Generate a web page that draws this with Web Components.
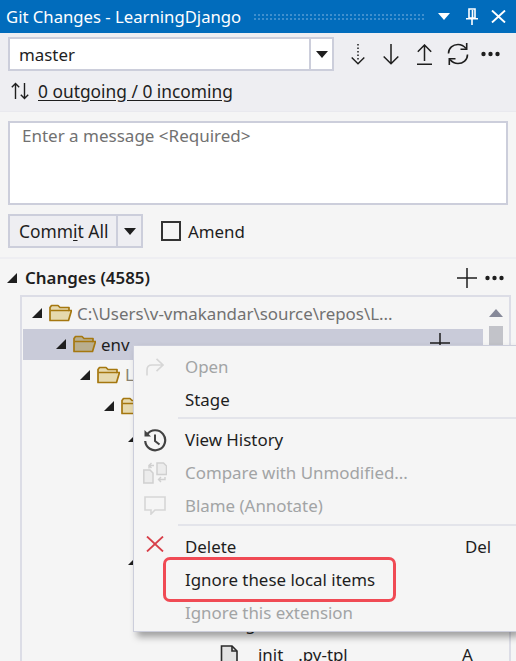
<!DOCTYPE html>
<html>
<head>
<meta charset="utf-8">
<title>Git Changes</title>
<style>
html, body { margin: 0; padding: 0; }
body {
    width: 516px;
    height: 661px;
    overflow: hidden;
    background: #f5f5f5;
    color: #1e1e1e;
    font: 16.9px "Noto Sans", "Open Sans", sans-serif;
}
</style>
</head>
<body>
<git-changes-panel></git-changes-panel>
<script>
const ICONS = {
    folder: color => `<svg width="23" height="18" viewBox="0 0 23 18"><path d="M1 16.5V3.5L2.5 1.5H9L11 3.5H20V6.5H22.5L19.5 16.5Z" fill="${color}" stroke="#a5770f" stroke-width="1.7" stroke-linejoin="round"/><path d="M1.5 6.5H20" stroke="#a5770f" stroke-width="1.5" fill="none"/></svg>`,
    file: `<svg width="18" height="20" viewBox="0 0 18 20"><path d="M1.5 1H12L17 6V24H1.5Z" fill="#e2e2e2" stroke="#2a2a2a" stroke-width="1.6"/><path d="M12 1V6H17" fill="none" stroke="#2a2a2a" stroke-width="1.6"/></svg>`,
    fetch: `<svg width="14" height="21" viewBox="0 0 14 21"><path d="M7 0V16" stroke="#1e1e1e" stroke-width="1.5" stroke-dasharray="1.6 1.9" fill="none"/><path d="M.7 13.5L7 19.8L13.3 13.5" stroke="#1e1e1e" stroke-width="1.4" fill="none"/></svg>`,
    pull: `<svg width="16" height="21" viewBox="0 0 16 21"><path d="M8 0V19.5M.7 12.5L8 19.8L15.3 12.5" stroke="#1e1e1e" stroke-width="1.5" fill="none"/></svg>`,
    push: `<svg width="15" height="21" viewBox="0 0 15 21"><path d="M7.5 1V17M.8 7.8L7.5 1L14.2 7.8M0 20.2H15" stroke="#1e1e1e" stroke-width="1.5" fill="none"/></svg>`,
    sync: `<svg width="22" height="22" viewBox="0 0 22 22"><path d="M1.5 10.5C1.5 5 6 1.5 11 1.5C14.5 1.5 17 3 19 5.5M20.5 11.5C20.5 17 16 20.5 11 20.5C7.5 20.5 5 19 3 16.5" stroke="#1e1e1e" stroke-width="1.6" fill="none"/><path d="M19.7 0V6.2H13.5M2.3 22V15.8H8.5" stroke="#1e1e1e" stroke-width="1.6" fill="none"/></svg>`,
    dots: `<svg width="19" height="6" viewBox="0 0 19 6"><circle cx="2.5" cy="3" r="2.2" fill="#1e1e1e"/><circle cx="9.5" cy="3" r="2.2" fill="#1e1e1e"/><circle cx="16.5" cy="3" r="2.2" fill="#1e1e1e"/></svg>`,
    plus: `<svg width="20" height="20" viewBox="0 0 20 20"><path d="M10 0V20M0 10H20" stroke="#1e1e1e" stroke-width="1.5" fill="none"/></svg>`,
    updown: `<svg width="18" height="18" viewBox="0 0 18 18"><path d="M4.5 17V1.5M.8 5.2L4.5 1.5L8.2 5.2M13.5 1V16.5M9.8 12.8L13.5 16.5L17.2 12.8" stroke="#1e1e1e" stroke-width="1.4" fill="none"/></svg>`,
    open: `<svg width="18" height="18" viewBox="0 0 18 18"><path d="M1 17.5V12C1 9 3 7 6 7H17M10.5 .8L17 7L10.5 13.2" stroke="#d6d6d6" stroke-width="1.6" fill="none"/></svg>`,
    history: `<svg width="24" height="24" viewBox="0 0 24 24"><path d="M4 6.5A10 10 0 1 1 2.2 13" stroke="#424242" stroke-width="2.2" fill="none"/><path d="M1.5 2L8 8.5H1.5Z" fill="#424242"/><path d="M12 6.5V13L16.5 16.5" stroke="#424242" stroke-width="2" fill="none"/></svg>`,
    compare: `<svg width="24" height="22" viewBox="0 0 24 22"><path d="M14 1H20.5L23.5 4V12.5H14Z" fill="#ececec" stroke="#d0d0d0" stroke-width="1.5"/><path d="M.8 8H7L10 11V21H.8Z" fill="#ececec" stroke="#d0d0d0" stroke-width="1.5"/><path d="M11 3.5H6V6.5M8.5 1L6 3.5L8.5 6M22 15V17.5H16M18 15L15.5 17.5L18 20" stroke="#d0d0d0" stroke-width="1.4" fill="none"/></svg>`,
    blame: `<svg width="22" height="19" viewBox="0 0 22 19"><path d="M1 1H21V14H11L7 18V14H1Z" fill="none" stroke="#d6d6d6" stroke-width="1.6"/></svg>`,
    del: `<svg width="18" height="16" viewBox="0 0 18 16"><path d="M1 .5L17 15.5M17 .5L1 15.5" stroke="#d8404a" stroke-width="1.8" fill="none"/></svg>`
};

class GitTitleBar extends HTMLElement {
    constructor() {
        super();
        this.attachShadow({mode: "open"});
        this.shadowRoot.innerHTML = /* html */`
        <style>
        :host { display: flex; align-items: center; height: 33px; background: #016cbc; color: #fff; padding: 0 10px 0 6px; box-sizing: border-box; }
        .title { font-size: 16.7px; white-space: nowrap; }
        .grip { flex: 1; height: 8px; margin: 0 12px 0 12px; background-image: radial-gradient(#3f8fce 1px, transparent 1.2px); background-size: 4px 4px; }
        .btns { display: flex; align-items: center; }
        svg { display: block; }
        </style>
        <span class="title"><slot></slot></span>
        <div class="grip"></div>
        <div class="btns">
            <svg width="12" height="7" viewBox="0 0 12 7"><path d="M0 0H12L6 7Z" fill="#fff"/></svg>
            <svg style="margin:0 13px 0 16px" width="12" height="17" viewBox="0 0 12 17"><path d="M3 1H9V10H3ZM6.5 2V10M0 10.8H12M6 11V17" stroke="#fff" stroke-width="1.6" fill="none"/></svg>
            <svg width="15" height="13" viewBox="0 0 15 13"><path d="M1 0.5L14 12.5M14 0.5L1 12.5" stroke="#fff" stroke-width="1.9" fill="none"/></svg>
        </div>`;
    }
}

class BranchBar extends HTMLElement {
    constructor() {
        super();
        this.attachShadow({mode: "open"});
        this.shadowRoot.innerHTML = /* html */`
        <style>
        :host { display: block; background: #eeeef2; height: 79px; padding: 4px 8px 0; box-sizing: border-box; border-bottom: 1px solid #e9e9ee; }
        .top { display: flex; align-items: center; }
        .combo { display: flex; width: 326px; height: 34px; box-sizing: border-box; border: 2px solid #cccedb; background: #fff; }
        .name { flex: 1; padding-left: 9px; line-height: 31px; }
        .arrow { width: 21px; border-left: 2px solid #cccedb; display: flex; align-items: center; justify-content: center; }
        .tools { display: flex; align-items: center; margin-left: 17px; gap: 18px; }
        .tools .s { margin-left: -3px; }
        .tools .d { margin-left: -6px; }
        .sync { display: flex; align-items: center; gap: 9px; margin: 8px 0 0 3px; font-size: 17.35px; }
        a { color: inherit; text-decoration: underline; text-underline-offset: 2px; }
        svg { display: block; }
        </style>
        <div class="top">
            <div class="combo">
                <div class="name"><slot name="branch"></slot></div>
                <div class="arrow"><svg width="12" height="7" viewBox="0 0 12 7"><path d="M0 0H12L6 7Z" fill="#1e1e1e"/></svg></div>
            </div>
            <div class="tools">${ICONS.fetch}${ICONS.pull}${ICONS.push}<span class="s">${ICONS.sync}</span><span class="d">${ICONS.dots}</span></div>
        </div>
        <div class="sync">${ICONS.updown}<a><slot name="status"></slot></a></div>`;
    }
}

class CommitBox extends HTMLElement {
    constructor() {
        super();
        this.attachShadow({mode: "open"});
        this.shadowRoot.innerHTML = /* html */`
        <style>
        :host { display: block; padding: 9px 8px 9px; border-bottom: 2px solid #eeeef2; }
        .msg { height: 84px; box-sizing: border-box; border: 2px solid #cccedb; background: #fff; color: #717171; padding: 0 12px; line-height: 26px; font-size: 17px; }
        .row { display: flex; align-items: center; margin-top: 9px; }
        .split { display: flex; height: 34px; box-sizing: border-box; border: 2px solid #cccedb; background: #eeeef2; }
        .main { width: 108px; padding-left: 9px; box-sizing: border-box; line-height: 31px; border-right: 2px solid #cccedb; font-size: 17.4px; }
        .main u { text-underline-offset: 2px; }
        .drop { width: 23px; display: flex; align-items: center; justify-content: center; }
        .check { width: 20px; height: 20px; box-sizing: border-box; border: 2px solid #333; background: #f5f5f5; margin-left: 18px; }
        .label { margin-left: 7px; padding-top: 1px; }
        svg { display: block; }
        </style>
        <div class="msg">Enter a message &lt;Required&gt;</div>
        <div class="row">
            <div class="split">
                <div class="main">Comm<u>i</u>t All</div>
                <div class="drop"><svg width="12" height="7" viewBox="0 0 12 7"><path d="M0 0H12L6 7Z" fill="#1e1e1e"/></svg></div>
            </div>
            <div class="check"></div>
            <div class="label">Amend</div>
        </div>`;
    }
}

class TreeRow extends HTMLElement {
    connectedCallback() {
        if (this.shadowRoot) return;
        this.attachShadow({mode: "open"});
        const level = Number(this.getAttribute("level") || 0);
        const kind = this.getAttribute("kind") || "folder";
        const selected = this.hasAttribute("selected");
        const icon = kind === "file" ? ICONS.file : ICONS.folder(selected ? "#b9ae8e" : "#e6d9ae");
        const tri = kind === "file" ? "" : `<svg class="tri" width="12" height="12" viewBox="0 0 12 12"><path d="M11 1V11H1Z" fill="#1e1e1e"/></svg>`;
        this.shadowRoot.innerHTML = /* html */`
        <style>
        :host { display: block; }
        .row { display: flex; align-items: center; height: 30.8px; padding-left: ${8 + level * 24}px; white-space: nowrap; position: relative; color: var(--row-color, #1e1e1e); }
        :host([selected]) .row { background: #c9cbd9; }
        .tri { width: 12px; flex: none; margin-right: 6px; }
        .spacer { width: 21px; flex: none; }
        .icon { flex: none; margin-right: 5px; display: flex; }
        :host([kind="file"]) .icon { margin-top: 6px; }
        :host([kind="file"]) .status { padding-top: 4px; }
        .text { flex: 1; overflow: hidden; padding-top: var(--text-top, 0); }
        .status { position: absolute; left: 439px; }
        .add { position: absolute; left: 407px; top: 4.5px; }
        svg { display: block; }
        </style>
        <div class="row">
            ${tri || '<span class="spacer"></span>'}
            <span class="icon">${icon}</span>
            <span class="text"><slot></slot></span>
            ${selected ? `<span class="add">${ICONS.plus}</span>` : ""}
            ${this.hasAttribute("status") ? `<span class="status">${this.getAttribute("status")}</span>` : ""}
        </div>`;
    }
}

class ChangesTree extends HTMLElement {
    constructor() {
        super();
        this.attachShadow({mode: "open"});
        this.shadowRoot.innerHTML = /* html */`
        <style>
        :host { display: block; padding-top: 5px; }
        .head { display: flex; align-items: center; height: 27px; padding: 0 12px 0 6px; }
        .tri { margin-right: 7px; }
        .title { flex: 1; font-weight: 600; font-size: 16.9px; }
        .acts { display: flex; align-items: center; gap: 8px; }
        .box { margin: 4px 5px 0 20px; border: 2px solid #dcdde6; border-bottom: 0; height: 400px; display: flex; box-sizing: border-box; padding-left: 1px; padding-top: 1px; }
        .rows { width: 460px; flex: none; }
        .bar { width: 26px; display: flex; flex-direction: column; align-items: center; gap: 9px; padding-top: 11px; }
        .thumb { width: 14px; height: 40px; background: #c2c3c9; }
        svg { display: block; }
        </style>
        <div class="head">
            <svg class="tri" width="12" height="12" viewBox="0 0 12 12"><path d="M11 1V11H1Z" fill="#1e1e1e"/></svg>
            <span class="title"><slot name="title"></slot></span>
            <span class="acts">${ICONS.plus}${ICONS.dots}</span>
        </div>
        <div class="box">
            <div class="rows"><slot></slot></div>
            <div class="bar">
                <svg width="14" height="8" viewBox="0 0 14 8"><path d="M7 0L14 8H0Z" fill="#868999"/></svg>
                <div class="thumb"></div>
            </div>
        </div>`;
    }
}

class MenuItem extends HTMLElement {
    connectedCallback() {
        if (this.shadowRoot) return;
        this.attachShadow({mode: "open"});
        const icon = ICONS[this.getAttribute("icon")] || "";
        const key = this.getAttribute("key") || "";
        this.shadowRoot.innerHTML = /* html */`
        <style>
        :host { display: flex; align-items: center; height: 33px; color: #1e1e1e; }
        :host([disabled]) { color: #a2a4a5; }
        .icon { width: 51px; flex: none; display: flex; justify-content: center; padding-right: 9px; box-sizing: border-box; }
        :host([icon="del"]) .icon { margin-top: -5px; }
        .text { flex: 1; white-space: nowrap; }
        .key { width: 51px; }
        svg { display: block; }
        </style>
        <span class="icon">${icon}</span>
        <span class="text"><slot></slot></span>
        <span class="key">${key}</span>`;
    }
}

class ContextMenu extends HTMLElement {
    constructor() {
        super();
        this.attachShadow({mode: "open"});
        this.shadowRoot.innerHTML = /* html */`
        <style>
        :host { display: block; position: absolute; left: 133px; top: 345px; width: 383px; height: 287px; box-sizing: border-box; background: #f5f5f5; border: 1px solid #cccedb; border-right: 0; padding-top: 4px; box-shadow: 4px 5px 7px rgba(0,0,0,.35); }
        </style>
        <slot></slot>`;
    }
}

class MenuSep extends HTMLElement {
    constructor() {
        super();
        this.attachShadow({mode: "open"});
        this.shadowRoot.innerHTML = `<style>:host { display: block; height: 2px; margin: 1px 0 4px 44px; background: #e3e4ea; }</style>`;
    }
}

class GitChangesPanel extends HTMLElement {
    constructor() {
        super();
        this.attachShadow({mode: "open"});
        this.shadowRoot.innerHTML = /* html */`
        <style>
        :host { display: block; position: relative; width: 516px; height: 661px; overflow: hidden; }
        .mark { position: absolute; left: 163px; top: 557px; width: 233px; height: 45px; box-sizing: border-box; border: 3px solid #f04a54; border-radius: 7px; }
        </style>
        <git-title-bar>Git Changes - LearningDjango</git-title-bar>
        <branch-bar>
            <span slot="branch">master</span>
            <span slot="status">0 outgoing / 0 incoming</span>
        </branch-bar>
        <commit-box></commit-box>
        <changes-tree>
            <span slot="title">Changes (4585)</span>
            <tree-row level="0" style="--row-color:#717171">C:\\Users\\v-vmakandar\\source\\repos\\L...</tree-row>
            <tree-row level="1" selected>env</tree-row>
            <tree-row level="2" style="--row-color:#8a8270">Lib</tree-row>
            <tree-row level="3"></tree-row>
            <tree-row level="4"></tree-row>
            <tree-row level="5"></tree-row>
            <tree-row level="5"></tree-row>
            <tree-row level="5"></tree-row>
            <tree-row level="4"></tree-row>
            <tree-row level="5"></tree-row>
            <tree-row level="6" style="--text-top:4px">lang</tree-row>
            <tree-row level="7" kind="file" status="A" style="--text-top:4px">__init__.py-tpl</tree-row>
        </changes-tree>
        <context-menu>
            <menu-item icon="open" disabled>Open</menu-item>
            <menu-item>Stage</menu-item>
            <menu-sep></menu-sep>
            <menu-item icon="history">View History</menu-item>
            <menu-item icon="compare" disabled>Compare with Unmodified...</menu-item>
            <menu-item icon="blame" disabled>Blame (Annotate)</menu-item>
            <menu-sep style="margin-top:2px"></menu-sep>
            <menu-item icon="del" key="Del">Delete</menu-item>
            <menu-item>Ignore these local items</menu-item>
            <menu-item disabled>Ignore this extension</menu-item>
        </context-menu>
        <div class="mark"></div>`;
    }
}

customElements.define("git-title-bar", GitTitleBar);
customElements.define("branch-bar", BranchBar);
customElements.define("commit-box", CommitBox);
customElements.define("tree-row", TreeRow);
customElements.define("changes-tree", ChangesTree);
customElements.define("menu-item", MenuItem);
customElements.define("menu-sep", MenuSep);
customElements.define("context-menu", ContextMenu);
customElements.define("git-changes-panel", GitChangesPanel);
</script>
</body>
</html>
